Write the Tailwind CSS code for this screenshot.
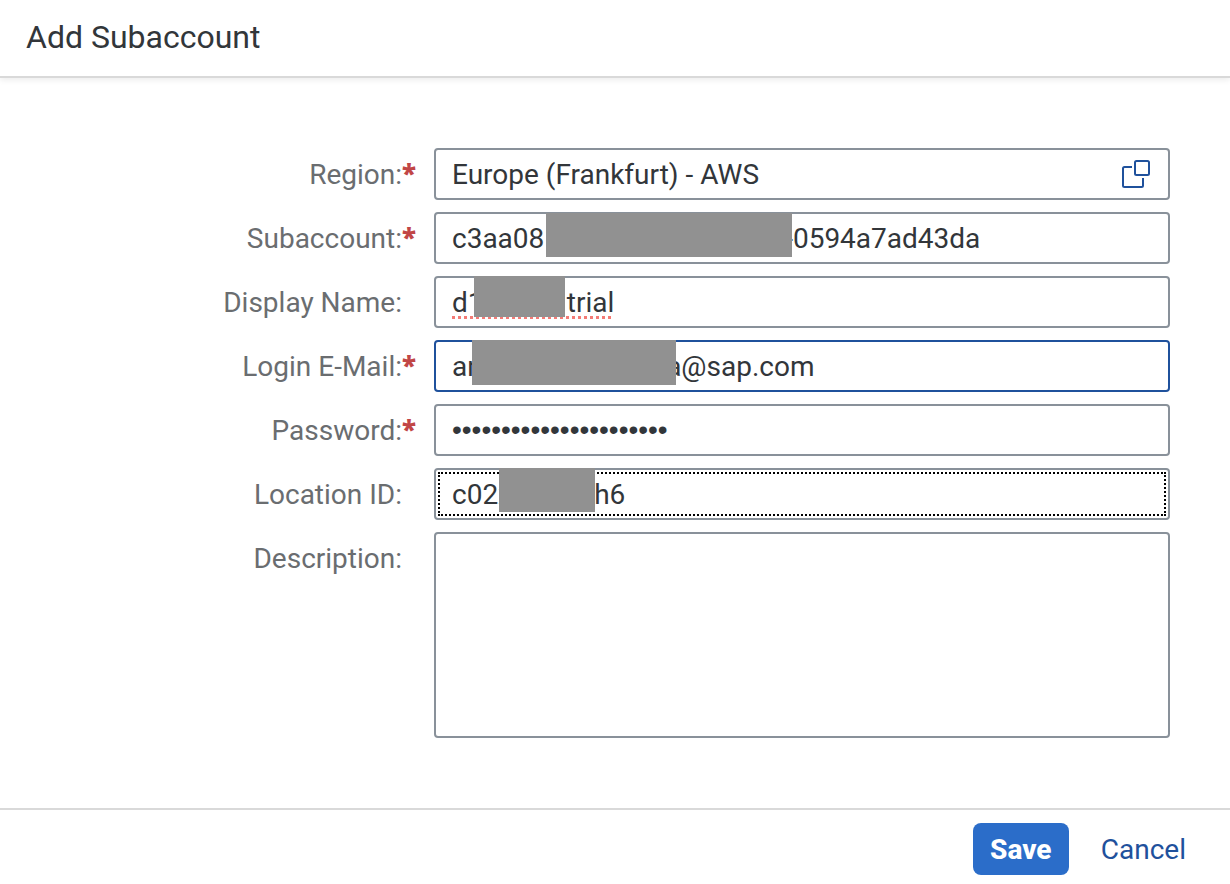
<!DOCTYPE html>
<html lang="en">
<head>
<meta charset="utf-8">
<meta name="viewport" content="width=device-width, initial-scale=1">
<title>Add Subaccount</title>
<script src="https://cdn.jsdelivr.net/npm/@tailwindcss/browser@4"></script>
</head>
<body class="flex min-h-screen flex-col bg-white font-['Roboto',sans-serif] text-[28px] leading-8 text-[#32363a]">
<header class="border-b-2 border-[#d9d9d9] px-[26px] pt-[17px] pb-[19px] shadow-[0_2px_6px_rgba(0,0,0,0.08)]">
  <h1 class="text-[32px] leading-10">Add Subaccount</h1>
</header>
<main class="grow pt-[70px] pr-[60px] pb-[70px] pl-[66px]">
  <form id="subaccount" class="grid grid-cols-[1fr_2fr] gap-y-3">
    <label for="region" class="flex justify-end pt-[11px] pr-[18px] text-[#6a6d70]">Region:<span class="w-[14px] font-['Noto_Sans',sans-serif] text-[26px] leading-7 font-black text-[#c14646]">*</span></label>
    <div class="relative">
      <input id="region" type="text" required value="Europe (Frankfurt) - AWS" class="h-[52px] w-full rounded border-2 border-[#89919a] bg-white pr-16 pl-4 outline-none">
      <button type="button" aria-label="Choose region" class="absolute top-0 right-0 flex h-[52px] w-[68px] items-center justify-center text-[#1f519c]">
        <svg class="size-7" viewBox="0 0 28 28" fill="none" stroke="currentColor" stroke-width="2" aria-hidden="true"><path d="M10 7H2.500Q1 7 1 8.500V25.500Q1 27 2.500 27H19.500Q21 27 21 25.500V18"/><rect x="13" y="1" width="14" height="14" rx="1.500"/></svg>
      </button>
    </div>

    <label for="account" class="flex justify-end pt-[11px] pr-[18px] text-[#6a6d70]">Subaccount:<span class="w-[14px] font-['Noto_Sans',sans-serif] text-[26px] leading-7 font-black text-[#c14646]">*</span></label>
    <div class="relative">
      <input id="account" type="text" required value="c3aa081                                &#8202;-0594a7ad43da" class="h-[52px] w-full rounded border-2 border-[#89919a] bg-white px-4 outline-none">
      <span class="absolute top-[1px] left-[112px] h-11 w-[246px] bg-[#919191]"></span>
    </div>

    <label for="display" class="flex justify-end pt-[11px] pr-8 text-[#6a6d70]">Display Name:</label>
    <div class="relative">
      <input id="display" type="text" value="d1            trial" class="h-[52px] w-full rounded border-2 border-[#89919a] bg-white px-4 underline decoration-[#f47b76] decoration-dotted decoration-3 underline-offset-4 outline-none">
      <span class="absolute top-0 left-10 h-[41px] w-[91px] bg-[#919191]"></span>
    </div>

    <label for="email" class="flex justify-end pt-[11px] pr-[18px] text-[#6a6d70]">Login E-Mail:<span class="w-[14px] font-['Noto_Sans',sans-serif] text-[26px] leading-7 font-black text-[#c14646]">*</span></label>
    <div class="relative">
      <input id="email" type="text" required value="an                          &#8202;a@sap.com" class="h-[52px] w-full rounded border-2 border-[#1f519c] bg-white px-4 outline-none">
      <span class="absolute top-0 left-[38px] h-[45px] w-[204px] bg-[#919191]"></span>
    </div>

    <label for="password" class="flex justify-end pt-[11px] pr-[18px] text-[#6a6d70]">Password:<span class="w-[14px] font-['Noto_Sans',sans-serif] text-[26px] leading-7 font-black text-[#c14646]">*</span></label>
    <input id="password" type="password" required value="abcdefghijklmnopqrstuv" class="h-[52px] w-full rounded border-2 border-[#89919a] bg-white px-4 font-['Liberation_Sans',sans-serif] outline-none">

    <label for="location" class="flex justify-end pt-[11px] pr-8 text-[#6a6d70]">Location ID:</label>
    <div class="relative">
      <input id="location" type="text" value="c02x           &#8202;&#8202;h6" class="h-[52px] w-full rounded border-2 border-[#89919a] bg-white px-4 outline-2 -outline-offset-6 outline-black outline-dotted">
      <span class="absolute top-0 left-[65px] h-11 w-24 bg-[#919191]"></span>
    </div>

    <label for="description" class="flex justify-end pt-[11px] pr-8 text-[#6a6d70]">Description:</label>
    <textarea id="description" class="block h-[206px] w-full resize-none rounded border-2 border-[#89919a] bg-white px-4 py-2 outline-none"></textarea>
  </form>
</main>
<footer class="flex justify-end gap-4 border-t-2 border-[#d9d9d9] pt-[13px] pr-7 pb-[9px]">
  <button type="submit" form="subaccount" class="h-[52px] min-w-24 rounded-lg bg-[#2b6dc9] px-3 pt-0.5 font-extrabold text-white">Save</button>
  <button type="button" class="h-[52px] rounded-lg px-4 pt-0.5 text-[#1f519c]">Cancel</button>
</footer>
</body>
</html>
